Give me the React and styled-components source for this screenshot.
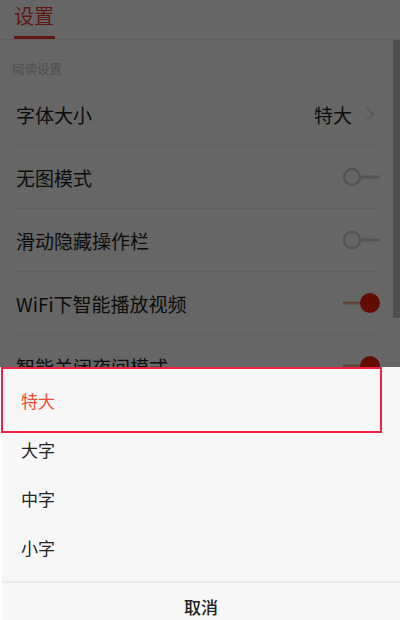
import React from 'react';
import styled, { createGlobalStyle } from 'styled-components';

const GlobalStyle = createGlobalStyle`
  html, body {
    margin: 0;
    padding: 0;
    background: #fff;
  }
  * {
    box-sizing: border-box;
  }
`;

const Page = styled.div`
  position: relative;
  width: 400px;
  height: 620px;
  overflow: hidden;
  background: #fff;
  font-family: "Noto Sans CJK SC", "Noto Sans", sans-serif;
  color: #222;
`;

const Header = styled.div`
  display: flex;
  height: 40px;
  padding-left: 14px;
  border-bottom: 1px solid #f0f0f0;
`;

const Tab = styled.div`
  padding: 4px 0 8px;
  font-size: 20px;
  line-height: 24px;
  color: #f23c2c;
  border-bottom: 3px solid #f23c2c;
  width: 41px;
`;

const SectionLabel = styled.div`
  height: 43px;
  padding: 22px 0 0 12px;
  font-size: 12.5px;
  line-height: 14px;
  color: #c8c8c8;
`;

const List = styled.div`
  margin: 0 20px 0 16px;
`;

const Row = styled.div`
  display: flex;
  align-items: center;
  justify-content: space-between;
  height: 63px;
  border-bottom: 1px solid #eeeeee;
  font-size: 19px;
`;

const RowRight = styled.div`
  display: flex;
  align-items: center;
  gap: 14px;
  padding-right: 6px;
`;

const Scrollbar = styled.div`
  position: absolute;
  right: 0;
  top: 40px;
  width: 7px;
  height: 278px;
  background: #c4c4c4;
`;

const Mask = styled.div`
  position: absolute;
  inset: 0;
  background: rgba(0, 0, 0, 0.6);
`;

const Sheet = styled.div`
  position: absolute;
  left: 0;
  right: 0;
  top: 367px;
  bottom: 0;
  background: #f7f7f7;
  border-left: 2px solid #fff;
`;

const Options = styled.div`
  position: relative;
  padding: 9px 0;
  border-bottom: 2px solid #ebebeb;
`;

const Option = styled.div`
  height: 49px;
  display: flex;
  align-items: center;
  padding-left: 19px;
  font-size: 17px;
  color: ${(p) => (p.$active ? '#f44b30' : '#222')};
`;

const Highlight = styled.div`
  position: absolute;
  left: -1px;
  top: 0;
  width: 381px;
  height: 66px;
  border: 2px solid #f2203f;
  pointer-events: none;
`;

const Cancel = styled.div`
  height: 46px;
  display: flex;
  align-items: center;
  justify-content: center;
  font-size: 17px;
  font-weight: 500;
  color: #222;
`;

const Chevron = () => (
  <svg width="8" height="14" viewBox="0 0 8 14">
    <polyline points="1,1 7,7 1,13" fill="none" stroke="#cfcfcf" strokeWidth="1.4" />
  </svg>
);

const Toggle = ({ on }) => (
  <svg width="40" height="24" viewBox="0 0 40 24">
    {on ? (
      <>
        <line x1="3" y1="12" x2="22" y2="12" stroke="#f7a79c" strokeWidth="3" />
        <circle cx="30" cy="12" r="10" fill="#f71e05" />
      </>
    ) : (
      <>
        <circle cx="12" cy="12" r="8" fill="none" stroke="#d2d2d2" strokeWidth="2.5" />
        <line x1="21" y1="12" x2="40" y2="12" stroke="#d2d2d2" strokeWidth="3" />
      </>
    )}
  </svg>
);

const settings = [
  { label: '无图模式', on: false },
  { label: '滑动隐藏操作栏', on: false },
  { label: 'WiFi下智能播放视频', on: true },
  { label: '智能关闭夜间模式', on: true },
];

const sizes = ['特大', '大字', '中字', '小字'];

export default function App() {
  return (
    <>
      <GlobalStyle />
      <Page>
        <Header>
          <Tab>设置</Tab>
        </Header>
        <SectionLabel>阅读设置</SectionLabel>
        <List>
          <Row>
            <span>字体大小</span>
            <RowRight>
              <span>特大</span>
              <Chevron />
            </RowRight>
          </Row>
          {settings.map((s) => (
            <Row key={s.label}>
              <span>{s.label}</span>
              <Toggle on={s.on} />
            </Row>
          ))}
        </List>
        <Scrollbar />
        <Mask />
        <Sheet>
          <Options>
            {sizes.map((s, i) => (
              <Option key={s} $active={i === 0}>
                {s}
              </Option>
            ))}
            <Highlight />
          </Options>
          <Cancel>取消</Cancel>
        </Sheet>
      </Page>
    </>
  );
}
